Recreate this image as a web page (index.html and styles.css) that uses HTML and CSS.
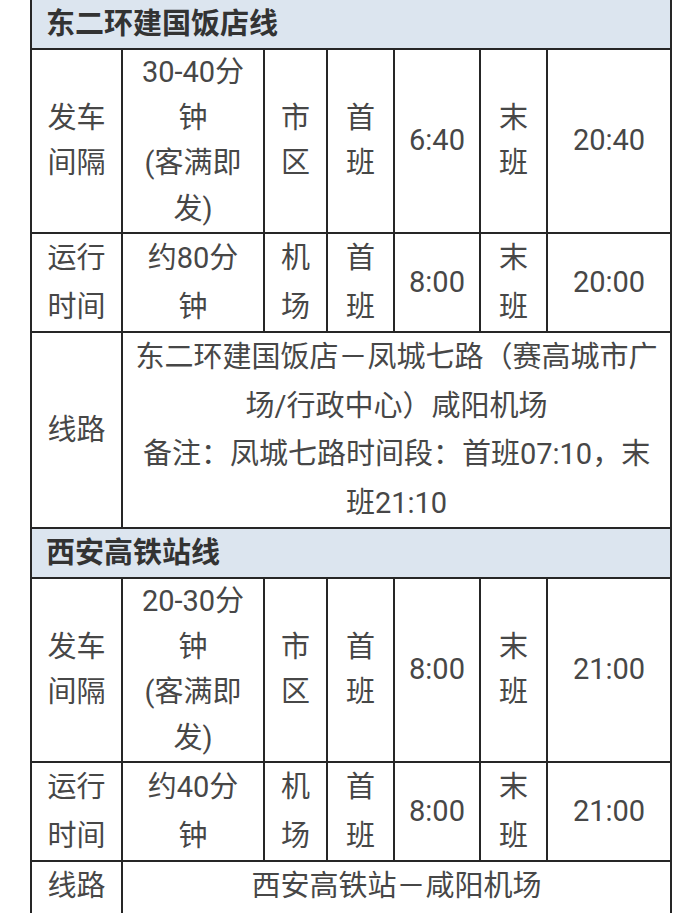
FILE: index.html
```html
<!DOCTYPE html>
<html lang="zh-CN">
<head>
<meta charset="utf-8">
<title>机场巴士</title>
<link rel="stylesheet" href="styles.css">
</head>
<body>
<table class="bus">
  <colgroup>
    <col class="c1"><col class="c2"><col class="c3"><col class="c4"><col class="c5"><col class="c6"><col class="c7">
  </colgroup>
  <tbody>
    <tr class="head"><th colspan="7">东二环建国饭店线</th></tr>
    <tr class="r-tall">
      <td>发车<br>间隔</td>
      <td>30-40分<br>钟<br>(客满即<br>发)</td>
      <td>市<br>区</td>
      <td>首<br>班</td>
      <td>6:40</td>
      <td>末<br>班</td>
      <td>20:40</td>
    </tr>
    <tr class="r-mid">
      <td>运行<br>时间</td>
      <td>约80分<br>钟</td>
      <td>机<br>场</td>
      <td>首<br>班</td>
      <td>8:00</td>
      <td>末<br>班</td>
      <td>20:00</td>
    </tr>
    <tr class="r-route">
      <td>线路</td>
      <td colspan="6">东二环建国饭店－凤城七路（赛高城市广<br>场/行政中心）咸阳机场<br>备注：凤城七路时间段：首班07:10，末<br>班21:10</td>
    </tr>
    <tr class="head"><th colspan="7">西安高铁站线</th></tr>
    <tr class="r-tall">
      <td>发车<br>间隔</td>
      <td>20-30分<br>钟<br>(客满即<br>发)</td>
      <td>市<br>区</td>
      <td>首<br>班</td>
      <td>8:00</td>
      <td>末<br>班</td>
      <td>21:00</td>
    </tr>
    <tr class="r-mid">
      <td>运行<br>时间</td>
      <td>约40分<br>钟</td>
      <td>机<br>场</td>
      <td>首<br>班</td>
      <td>8:00</td>
      <td>末<br>班</td>
      <td>21:00</td>
    </tr>
    <tr class="r-route r-last">
      <td>线路</td>
      <td colspan="6">西安高铁站－咸阳机场</td>
    </tr>
  </tbody>
</table>
</body>
</html>
```

FILE: styles.css
```css
html, body {
  margin: 0;
  padding: 0;
  background: #ffffff;
}

body {
  font-family: Roboto, "Noto Sans CJK SC", sans-serif;
  font-size: 29px;
  color: #474747;
}

.bus {
  border-collapse: collapse;
  table-layout: fixed;
  width: 640px;
  margin: -2px 0 0 30px;
}

.c1 { width: 91px; }
.c2 { width: 142px; }
.c3 { width: 63px; }
.c4 { width: 67px; }
.c5 { width: 86px; }
.c6 { width: 67px; }
.c7 { width: 124px; }

.bus th,
.bus td {
  border: 2px solid #262626;
  padding: 0 6px;
  text-align: center;
  vertical-align: middle;
  line-height: 48.5px;
}

.bus .head th {
  background: #dce5ef;
  color: #333333;
  font-weight: 700;
  text-align: left;
  padding: 0 14px;
  line-height: 48px;
}

.r-tall td {
  line-height: 45.5px;
}

.r-last td {
  padding-bottom: 6px;
}
```
